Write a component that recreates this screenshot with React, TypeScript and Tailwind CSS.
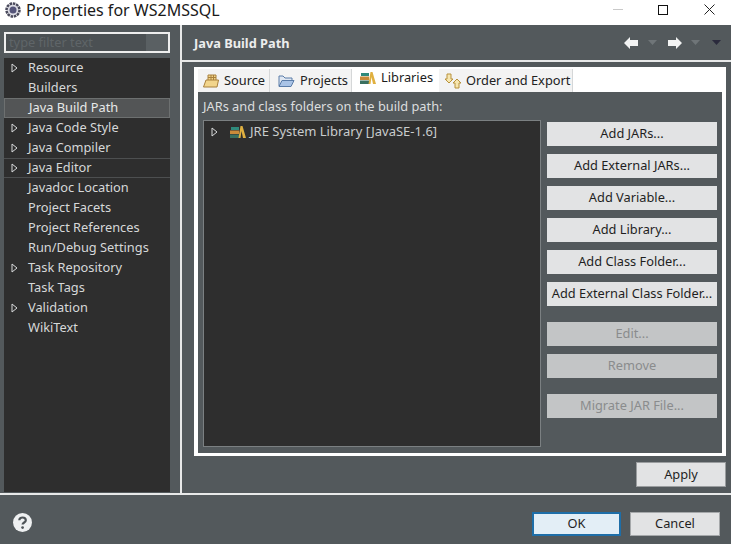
import type { ReactNode } from "react";

const font = "font-['Noto_Sans','Open_Sans',sans-serif]";

interface TreeItem {
  label: string;
  arrow?: boolean;
  selected?: boolean;
  lined?: boolean;
}

const treeItems: TreeItem[] = [
  { label: "Resource", arrow: true },
  { label: "Builders" },
  { label: "Java Build Path", selected: true },
  { label: "Java Code Style", arrow: true },
  { label: "Java Compiler", arrow: true },
  { label: "Java Editor", arrow: true, lined: true },
  { label: "Javadoc Location" },
  { label: "Project Facets" },
  { label: "Project References" },
  { label: "Run/Debug Settings" },
  { label: "Task Repository", arrow: true },
  { label: "Task Tags" },
  { label: "Validation", arrow: true },
  { label: "WikiText" },
];

function Arrow() {
  return (
    <svg width="7" height="10" viewBox="0 0 7 10" className="shrink-0">
      <path d="M1 1 L6 5 L1 9 Z" fill="none" stroke="#d8dadb" strokeWidth="1" />
    </svg>
  );
}

function LibraryIcon() {
  return (
    <svg width="16" height="14" viewBox="0 0 16 14" className="shrink-0">
      <rect x="1" y="2" width="8" height="3" fill="#2f8a7c" />
      <rect x="0" y="5.5" width="9" height="3.5" fill="#c98a3a" />
      <rect x="0" y="9.5" width="9" height="3.5" fill="#3a6f5f" />
      <path d="M8.5 13 L10.5 1 L12.5 1 L16 13 L13 13 L11.5 6 L10.5 13 Z" fill="#e0b040" />
    </svg>
  );
}

function SourceIcon() {
  return (
    <svg width="16" height="14" viewBox="0 0 16 14" className="shrink-0">
      <path d="M0.5 13 L3 6 L5 6 L5 1 L13 1 L13 6 L15.5 6 L14 13 Z" fill="#f2d58c" stroke="#a8803c" />
      <path d="M8 1 V6 M10.5 1 V6 M5 3.5 H13 M5 6 H13" stroke="#a8803c" />
    </svg>
  );
}

function ProjectsIcon() {
  return (
    <svg width="17" height="14" viewBox="0 0 17 14" className="shrink-0">
      <path d="M1 12 V2 H5 L7 4 H14 V7" fill="#dfe7f2" stroke="#5a7ca8" />
      <path d="M1 12.5 L4 6.5 H16 L13 12.5 Z" fill="#a9c3e6" stroke="#5a7ca8" />
    </svg>
  );
}

function OrderIcon() {
  return (
    <svg width="18" height="16" viewBox="0 0 18 16" className="shrink-0">
      <path d="M3 1 H7 V6 H9 L5 10 L1 6 H3 Z" fill="#f6e6b0" stroke="#b8923c" />
      <path d="M13 6 L17 10 H15 V15 H11 V10 H9 Z" fill="#f6e6b0" stroke="#b8923c" />
    </svg>
  );
}

function Tab({ icon, label, active, className }: { icon: ReactNode; label: string; active?: boolean; className: string }) {
  return (
    <div
      className={
        (active
          ? "h-[25px] self-start bg-white pb-[3px] text-[#1c1c1c] "
          : "h-[23px] self-end border-r border-[#d5d7d8] bg-[#f3f3f3] text-[#222] ") +
        "flex shrink-0 items-center " +
        className
      }
    >
      {icon}
      <span className="whitespace-nowrap">{label}</span>
    </div>
  );
}

function Btn({ label, disabled, className }: { label: string; disabled?: boolean; className?: string }) {
  return (
    <div
      className={
        "flex h-[24px] w-[170px] items-center justify-center text-[12.8px] " +
        (disabled ? "bg-[#c3c5c6] text-[#8a8c8d] " : "bg-[#e2e3e4] text-[#1f1f1f] ") +
        (className ?? "")
      }
    >
      {label}
    </div>
  );
}

function NavArrow({ flip }: { flip?: boolean }) {
  return (
    <svg width="14" height="12" viewBox="0 0 14 12" className={flip ? "shrink-0 rotate-180" : "shrink-0"}>
      <path d="M0 6 L6 0 V3 H14 V9 H6 V12 Z" fill="#f2f3f3" />
    </svg>
  );
}

function Caret({ color }: { color: string }) {
  return (
    <svg width="9" height="5" viewBox="0 0 9 5" className="shrink-0">
      <path d="M0 0 H9 L4.5 5 Z" fill={color} />
    </svg>
  );
}

export default function App() {
  return (
    <div className={`flex h-[544px] w-[731px] flex-col overflow-hidden bg-[#53595c] ${font}`}>
      {/* title bar */}
      <div className="flex h-[25px] items-center bg-white pb-[6px] pl-[5px] text-[#1a1a1a]">
        <svg width="16" height="16" viewBox="0 0 16 16" className="shrink-0">
          <circle cx="8" cy="8" r="6.5" fill="#dcdce4" stroke="#4a4a5c" strokeWidth="2.5" strokeDasharray="2.5 0.8" />
          <circle cx="8" cy="8" r="3.5" fill="#55557a" />
        </svg>
        <span className="ml-[5px] text-[16px] leading-none">Properties for WS2MSSQL</span>
        <div className="ml-auto flex items-center">
          <div className="h-px w-[10px] bg-[#c9c9c9]" />
          <div className="ml-[35px] h-[10px] w-[10px] border border-[#111]" />
          <svg width="11" height="11" viewBox="0 0 11 11" className="ml-[36px] mr-[16px]">
            <path d="M0.5 0.5 L10.5 10.5 M10.5 0.5 L0.5 10.5" stroke="#222" strokeWidth="1" />
          </svg>
        </div>
      </div>

      <div className="flex h-[468px]">
        {/* left pane */}
        <div className="flex w-[182px] shrink-0 flex-col border-r-2 border-[#e8e9e9] pl-[4px]">
          <div className="mt-[7px] flex h-[21px] w-[166px] items-center border-2 border-[#eeeeee] bg-[#4b5053] text-[12.8px]">
            <span className="pl-[3px] text-[#5f6568]">type filter text</span>
            <div className="ml-auto h-full w-[22px] bg-[#5a6063]" />
          </div>
          <div className="mt-[5px] flex h-[434px] w-[166px] flex-col bg-[#2e2e2e] text-[12.8px] text-[#d6d8d9]">
            {treeItems.map((item) => (
              <div
                key={item.label}
                className={
                  "flex h-[20px] items-center " +
                  (item.selected
                    ? "border border-[#6d7070] bg-[#535556] text-[#e8e9e9] "
                    : item.lined
                      ? "border-y border-[#4d4f50] "
                      : "")
                }
              >
                <div className="flex w-[24px] shrink-0 justify-center pr-[3px]">{item.arrow && <Arrow />}</div>
                <span className="whitespace-nowrap">{item.label}</span>
              </div>
            ))}
          </div>
        </div>

        {/* right pane */}
        <div className="flex flex-1 flex-col">
          <div className="flex h-[37px] shrink-0 items-center border-b-2 border-[#e8e9e9] pl-[12px] pr-[10px]">
            <span className="pt-[2px] text-[12.8px] font-bold text-[#eceded]">Java Build Path</span>
            <div className="ml-auto flex items-center">
              <NavArrow />
              <div className="ml-[10px]"><Caret color="#6f7578" /></div>
              <div className="ml-[11px]"><NavArrow flip /></div>
              <div className="ml-[9px]"><Caret color="#6f7578" /></div>
              <div className="ml-[12px]"><Caret color="#2a2a3c" /></div>
            </div>
          </div>

          <div className="ml-[12px] mt-[5px] flex h-[389px] w-[532px] flex-col bg-white">
            <div className="flex h-[25px] shrink-0 pl-[4px] text-[12.8px]">
              <Tab icon={<SourceIcon />} label="Source" className="w-[72px] gap-[5px] pl-[5px]" />
              <Tab icon={<ProjectsIcon />} label="Projects" className="w-[82px] gap-[5px] pl-[8px]" />
              <Tab icon={<LibraryIcon />} label="Libraries" active className="w-[87px] gap-[5px] pl-[8px]" />
              <Tab icon={<OrderIcon />} label="Order and Export" className="w-[134px] gap-[4px] pl-[5px]" />
            </div>
            <div className="mx-[4px] mb-[3px] flex flex-1 flex-col bg-[#53595c] pl-[5px] pr-[5px]">
              <div className="mt-[4px] h-[20px] text-[12.8px] leading-[20px] text-[#dcdedf]">
                JARs and class folders on the build path:
              </div>
              <div className="mt-[4px] flex gap-[6px]">
                <div className="h-[327px] w-[338px] border border-[#7b8082] bg-[#2e2e2e]">
                  <div className="mt-[1px] flex h-[20px] items-center pl-[7px] text-[13px] text-[#c9cccd]">
                    <Arrow />
                    <div className="ml-[12px]"><LibraryIcon /></div>
                    <span className="ml-[4px] whitespace-nowrap">JRE System Library [JavaSE-1.6]</span>
                  </div>
                </div>
                <div className="mt-[2px] flex flex-col">
                  <Btn label="Add JARs..." />
                  <Btn label="Add External JARs..." className="mt-[8px]" />
                  <Btn label="Add Variable..." className="mt-[8px]" />
                  <Btn label="Add Library..." className="mt-[8px]" />
                  <Btn label="Add Class Folder..." className="mt-[8px]" />
                  <Btn label="Add External Class Folder..." className="mt-[8px]" />
                  <Btn label="Edit..." disabled className="mt-[16px]" />
                  <Btn label="Remove" disabled className="mt-[8px]" />
                  <Btn label="Migrate JAR File..." disabled className="mt-[16px]" />
                </div>
              </div>
            </div>
          </div>

          <div className="ml-[454px] mt-[6px] flex h-[25px] w-[90px] items-center justify-center border border-[#9a9d9f] bg-[#e2e3e4] text-[12.8px] text-[#1f1f1f]">
            Apply
          </div>
        </div>
      </div>

      {/* bottom bar */}
      <div className="h-[2px] bg-[#e8e9e9]" />
      <div className="flex flex-1 items-center pl-[13px] pt-[6px]">
        <svg width="19" height="19" viewBox="0 0 19 19" className="shrink-0">
          <circle cx="9.5" cy="9.5" r="9.5" fill="#eef0f1" />
          <path d="M6.3 7.2 C6.3 3.6 12.8 3.6 12.8 7.2 C12.8 9.6 9.6 9.4 9.6 11.6" fill="none" stroke="#4d5357" strokeWidth="2.2" />
          <circle cx="9.6" cy="14.6" r="1.4" fill="#4d5357" />
        </svg>
        <div className="ml-auto mr-[11px] mt-[2px] flex items-center gap-[9px] text-[12.8px] text-[#1f1f1f]">
          <div className="flex h-[24px] w-[89px] items-center justify-center border-2 border-[#1e6ea8] bg-[#e3eef6]">OK</div>
          <div className="flex h-[24px] w-[90px] items-center justify-center border border-[#a5a8aa] bg-[#e2e3e4]">Cancel</div>
        </div>
      </div>
    </div>
  );
}
